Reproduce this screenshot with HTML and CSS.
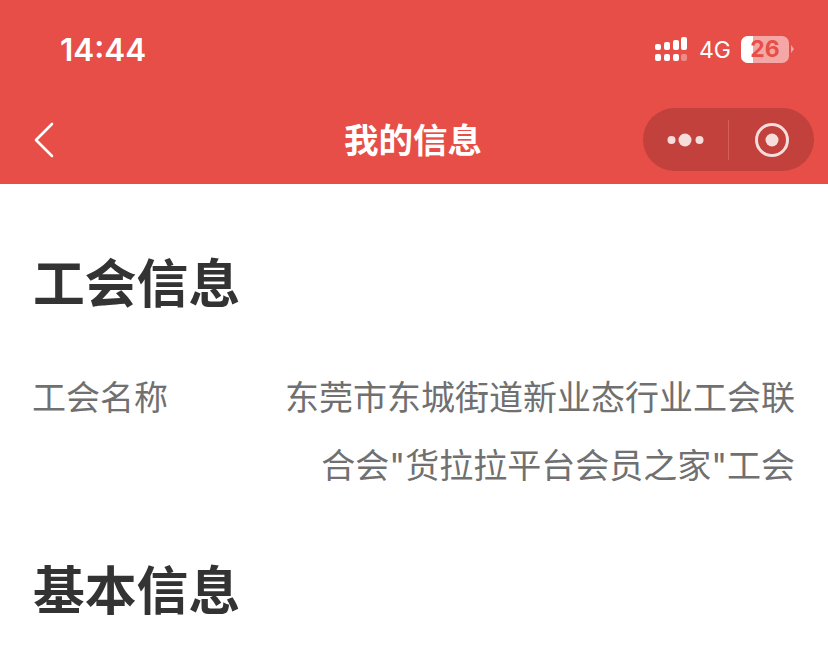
FILE: index.html
```html
<!DOCTYPE html>
<html lang="zh-CN">
<head>
<meta charset="utf-8">
<title>我的信息</title>
<link rel="stylesheet" href="styles.css">
</head>
<body>
<header class="header">
  <div class="status">
    <span class="time">14:44</span>
    <div class="status-right">
      <svg class="signal" width="34" height="26" viewBox="0 0 34 26">
        <g fill="#fff">
          <rect x="1" y="7" width="6" height="6" rx="2"/>
          <rect x="10" y="5" width="6" height="8" rx="2"/>
          <rect x="19" y="3" width="6" height="10" rx="2"/>
          <rect x="27" y="0" width="6" height="13" rx="2"/>
          <rect x="1" y="17" width="6" height="7" rx="2"/>
          <rect x="10" y="17" width="6" height="7" rx="2"/>
          <rect x="19" y="17" width="6" height="7" rx="2"/>
          <rect x="27" y="17" width="6" height="7" rx="2" fill-opacity=".35"/>
        </g>
      </svg>
      <span class="net">4G</span>
      <div class="battery">
        <div class="battery-fill"></div>
        <span class="battery-num">26</span>
      </div>
      <span class="battery-cap"></span>
    </div>
  </div>
  <div class="nav">
    <svg class="back" width="22" height="36" viewBox="0 0 22 36">
      <path d="M19 2 3 18l16 16" fill="none" stroke="#fff" stroke-width="2.6" stroke-linecap="round" stroke-linejoin="round"/>
    </svg>
    <h1 class="nav-title">我的信息</h1>
    <div class="capsule">
      <div class="capsule-cell">
        <svg width="38" height="16" viewBox="0 0 38 16"><g fill="#f6dcdb"><circle cx="4.500" cy="8" r="4"/><circle cx="18" cy="8" r="6.500"/><circle cx="32.500" cy="8" r="4"/></g></svg>
      </div>
      <span class="capsule-line"></span>
      <div class="capsule-cell">
        <svg width="36" height="36" viewBox="0 0 36 36"><circle cx="18" cy="18" r="15.500" fill="none" stroke="#f6dcdb" stroke-width="3"/><circle cx="18" cy="18" r="6.500" fill="#f6dcdb"/></svg>
      </div>
    </div>
  </div>
</header>
<main class="content">
  <h2 class="section-title">工会信息</h2>
  <div class="row">
    <span class="label">工会名称</span>
    <span class="value">东莞市东城街道新业态行业工会联合会"货拉拉平台会员之家"工会</span>
  </div>
  <h2 class="section-title second">基本信息</h2>
</main>
</body>
</html>
```
FILE: styles.css
```css
* { box-sizing: border-box; }
html, body { margin: 0; height: 100%; }
body {
  width: 828px;
  height: 646px;
  overflow: hidden;
  background: #fff;
  font-family: "Noto Sans CJK SC", "Noto Sans", sans-serif;
}
.header {
  height: 184px;
  background: #e64e47;
  color: #fff;
  display: flex;
  flex-direction: column;
}
.status {
  height: 96px;
  display: flex;
  justify-content: space-between;
  align-items: flex-start;
  padding: 31px 34px 0 60px;
}
.time {
  margin-top: 1px;
  font-family: Inter, "Liberation Sans", sans-serif;
  font-weight: 600;
  font-size: 31.500px;
  line-height: 36px;
}
.status-right {
  display: flex;
  align-items: center;
  height: 36px;
}
.signal { display: block; margin-right: 11px; margin-top: 1px; }
.net {
  margin: 2px 10px 0 0;
  font-family: Inter, "Liberation Sans", sans-serif;
  font-size: 23px;
  line-height: 36px;
}
.battery {
  position: relative;
  width: 48px;
  height: 27px;
  border-radius: 7px;
  background: #f4a7a4;
  overflow: hidden;
}
.battery-fill {
  width: 12px;
  height: 100%;
  background: #fff;
}
.battery-num {
  position: absolute;
  inset: 0;
  text-align: center;
  font-family: Inter, "Liberation Sans", sans-serif;
  font-weight: 700;
  font-size: 23px;
  line-height: 27px;
  color: #e64e47;
}
.battery-cap {
  width: 0;
  height: 0;
  margin-left: 2px;
  border-left: 3px solid #f4a7a4;
  border-top: 4px solid transparent;
  border-bottom: 4px solid transparent;
}
.nav {
  height: 88px;
  position: relative;
  display: flex;
  align-items: flex-start;
  justify-content: space-between;
  padding: 12px 14px 0 33px;
}
.back { display: block; margin-top: 14px; }
.nav-title {
  position: absolute;
  left: 0;
  right: 2px;
  top: 18px;
  margin: 0;
  text-align: center;
  font-size: 34.500px;
  line-height: 48px;
  font-weight: 700;
}
.capsule {
  width: 171px;
  height: 63px;
  border-radius: 32px;
  background: #c2413c;
  display: flex;
  align-items: center;
}
.capsule-cell {
  flex: 1;
  display: flex;
  align-items: center;
  justify-content: center;
}
.capsule-cell svg { display: block; }
.capsule-line {
  width: 1px;
  height: 40px;
  background: #d65f59;
}
.content { padding: 0 33px 0 32px; }
.section-title {
  margin: 0;
  padding: 63px 0 0 1px;
  font-size: 51.800px;
  line-height: 68px;
  font-weight: 700;
  color: #333;
}
.section-title.second { padding-top: 54px; }
.row {
  display: flex;
  margin-top: 49px;
  font-family: Inter, "Noto Sans CJK SC", sans-serif;
  font-size: 34px;
  line-height: 68px;
  color: #707070;
}
.label { flex: none; width: 250px; }
.value { flex: 1; text-align: right; }
```
